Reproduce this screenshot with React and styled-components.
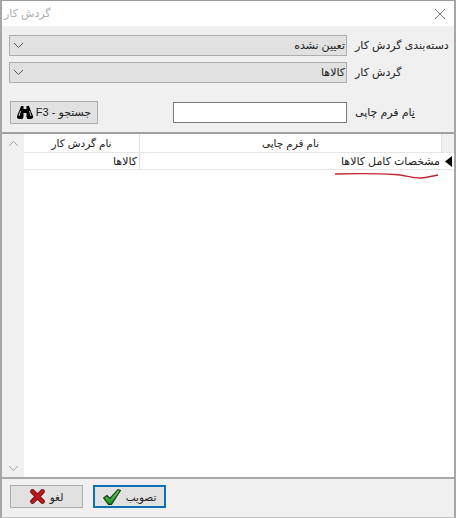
import React from 'react';
import styled, { createGlobalStyle } from 'styled-components';

const GlobalStyle = createGlobalStyle`
    html, body {
        margin: 0;
        padding: 0;
        background: #f0f0f0;
    }
    body {
        font-family: "Liberation Sans", "DejaVu Sans", sans-serif;
    }
`;

const Dialog = styled.div`
    width: 456px;
    height: 518px;
    box-sizing: border-box;
    display: flex;
    flex-direction: column;
    border: 1px solid #a6a6a6;
    border-top-color: #9a9a9a;
    border-bottom-color: #c4c4c4;
    border-right-width: 2px;
    border-left-width: 2px;
    background: #f0f0f0;
`;

const TitleBar = styled.div`
    height: 25px;
    flex: none;
    background: #fff;
    display: flex;
    align-items: center;
    justify-content: space-between;
    padding: 0 8px 0 2px;
`;

const Title = styled.span`
    font-size: 11px;
    color: #adadad;
    direction: rtl;
`;

const Form = styled.div`
    flex: none;
    height: 106px;
    box-sizing: border-box;
    padding: 9px 0 0 7px;
    display: flex;
    flex-direction: column;
`;

const Row = styled.div`
    display: flex;
    align-items: center;
    margin-top: ${(p) => p.$top || 0}px;
`;

const Select = styled.div`
    width: 338px;
    height: 21px;
    box-sizing: border-box;
    border: 1px solid #adadad;
    background: #e1e1e1;
    display: flex;
    align-items: center;
    justify-content: space-between;
    padding: 0 1px 0 3px;
`;

const SelectValue = styled.span`
    font-size: 11px;
    color: #222;
    direction: rtl;
    white-space: nowrap;
`;

const Label = styled.label`
    margin-left: 8px;
    font-size: 11px;
    color: #222;
    direction: rtl;
    white-space: nowrap;
`;

const SearchButton = styled.button`
    width: 88px;
    height: 23px;
    margin-left: 1px;
    padding: 0 4px;
    box-sizing: border-box;
    border: 1px solid #adadad;
    background: #e1e1e1;
    color: #222;
    font-family: inherit;
    font-size: 10.5px;
    display: flex;
    align-items: center;
    justify-content: center;
    gap: 3px;
    white-space: nowrap;
`;

const SearchHint = styled.span`
    font-size: 11px;
`;

const TextInput = styled.input`
    width: 174px;
    height: 21px;
    margin-left: 75px;
    box-sizing: border-box;
    border: 1px solid #7a7a7a;
    background: #fff;
    outline: none;
    padding: 0;
`;

const Grid = styled.div`
    position: relative;
    flex: 1;
    min-height: 0;
    background: #fff;
    border-top: 2px solid #a0a0a0;
    border-bottom: 2px solid #a9a9a9;
    display: flex;
`;

const Scrollbar = styled.div`
    width: 22px;
    flex: none;
    background: #f0f0f0;
    display: flex;
    flex-direction: column;
    justify-content: space-between;
    align-items: center;
    padding: 6px 0 5px;
    box-sizing: border-box;
`;

const Table = styled.div`
    flex: 1;
    display: flex;
    flex-direction: column;
`;

const TableRow = styled.div`
    display: flex;
    height: ${(p) => p.$height}px;
    box-sizing: border-box;
    border-bottom: 1px solid #e6e6e6;
`;

const Cell = styled.div`
    width: ${(p) => p.$width}px;
    flex: ${(p) => (p.$width ? 'none' : 1)};
    box-sizing: border-box;
    display: flex;
    align-items: center;
    justify-content: ${(p) => (p.$head ? 'center' : 'flex-start')};
    padding-right: ${(p) => (p.$head ? 0 : 2)}px;
    border-right: ${(p) => (p.$divider ? '1px solid #e0e0e0' : 'none')};
    font-size: ${(p) => (p.$head ? 10.5 : 11)}px;
    color: #222;
    direction: rtl;
    white-space: nowrap;
`;

const Indicator = styled.div`
    width: 12px;
    flex: none;
    box-sizing: border-box;
    height: ${(p) => p.$height}px;
    border-bottom: 1px solid #e6e6e6;
    background: ${(p) => p.$bg};
    display: flex;
    align-items: center;
    justify-content: center;
`;

const IndicatorColumn = styled.div`
    flex: none;
    display: flex;
    flex-direction: column;
`;

const Underline = styled.svg`
    position: absolute;
    left: 331px;
    top: 38px;
`;

const Footer = styled.div`
    flex: none;
    height: 38px;
    padding: 6px 0 0 8px;
    box-sizing: border-box;
    display: flex;
    gap: 10px;
`;

const ActionButton = styled.button`
    width: 73px;
    height: 23px;
    box-sizing: border-box;
    padding: 0;
    border: ${(p) => (p.$primary ? '2px solid #0f6fb5' : '1px solid #adadad')};
    background: #e1e1e1;
    color: #222;
    font-family: inherit;
    font-size: 10.5px;
    display: flex;
    align-items: center;
    justify-content: center;
    gap: 5px;
`;

const Chevron = ({ up, color = '#555', size = 11 }) => (
    <svg width={size} height="7" viewBox="0 0 11 7">
        <path d={up ? 'M1 6 L5.5 1.5 L10 6' : 'M1 1 L5.5 5.5 L10 1'} fill="none" stroke={color} strokeWidth="1" />
    </svg>
);

const Binoculars = () => (
    <svg width="16" height="13" viewBox="0 0 16 13">
        <path d="M4 0 H6.5 V3 H9.5 V0 H12 L13 3 L16 10 V12 L14 13 H10.5 L9.5 11 V7 H6.5 V11 L5.5 13 H2 L0 12 V10 L3 3 Z" fill="#000" />
        <path d="M3.5 5 L2 10 M12.5 5 L14 10" stroke="#fff" strokeWidth="0.8" fill="none" />
    </svg>
);

const CrossIcon = () => (
    <svg width="15" height="15" viewBox="0 0 15 15">
        <path d="M2.5 2.5 L12.5 12.5 M12.5 2.5 L2.5 12.5" stroke="#6e0c10" strokeWidth="4.6" strokeLinecap="round" fill="none" />
        <path d="M2.5 2.5 L12.5 12.5 M12.5 2.5 L2.5 12.5" stroke="#c1181d" strokeWidth="3" strokeLinecap="round" fill="none" />
    </svg>
);

const CheckIcon = () => (
    <svg width="18" height="16" viewBox="0 0 18 16">
        <defs>
            <linearGradient id="checkFill" x1="0" y1="0" x2="0" y2="1">
                <stop offset="0" stopColor="#7fd45f" />
                <stop offset="1" stopColor="#1f8a2a" />
            </linearGradient>
        </defs>
        <path d="M0.7 9 L4 6.5 L7 9.5 L15 0.7 L17.3 1.5 L8.5 15.3 L5.5 15.3 Z" fill="url(#checkFill)" stroke="#0c3f10" strokeWidth="1.2" />
    </svg>
);

const App = () => {
    return (
        <>
            <GlobalStyle />
            <Dialog>
                <TitleBar>
                    <Title>گردش کار</Title>
                    <svg width="12" height="12" viewBox="0 0 12 12">
                        <path d="M1 1 L11 11 M11 1 L1 11" stroke="#7a7a7a" strokeWidth="1" fill="none" />
                    </svg>
                </TitleBar>
                <Form>
                    <Row>
                        <Select>
                            <Chevron />
                            <SelectValue>تعیین نشده</SelectValue>
                        </Select>
                        <Label>دسته‌بندی گردش کار</Label>
                    </Row>
                    <Row $top={6}>
                        <Select>
                            <Chevron />
                            <SelectValue>کالاها</SelectValue>
                        </Select>
                        <Label>گردش کار</Label>
                    </Row>
                    <Row $top={18}>
                        <SearchButton>
                            <Binoculars />
                            <SearchHint>F3 - جستجو</SearchHint>
                        </SearchButton>
                        <TextInput />
                        <Label><u>ن</u>ام فرم چاپی</Label>
                    </Row>
                </Form>
                <Grid>
                    <Scrollbar>
                        <Chevron up color="#a6a6a6" />
                        <Chevron color="#a6a6a6" />
                    </Scrollbar>
                    <Table>
                        <TableRow $height={19}>
                            <Cell $width={116} $head $divider>نام گردش کار</Cell>
                            <Cell $head $divider>نام فرم چاپی</Cell>
                        </TableRow>
                        <TableRow $height={17}>
                            <Cell $width={116} $divider>کالاها</Cell>
                            <Cell>مشخصات کامل کالاها</Cell>
                        </TableRow>
                    </Table>
                    <IndicatorColumn>
                        <Indicator $height={19} $bg="#f0f0f0" />
                        <Indicator $height={17} $bg="#fff">
                            <svg width="7" height="11" viewBox="0 0 7 11">
                                <path d="M7 0 L0 5.5 L7 11 Z" fill="#000" />
                            </svg>
                        </Indicator>
                    </IndicatorColumn>
                    <Underline width="108" height="10" viewBox="0 0 108 10">
                        <path d="M2 2 C20 1.5 45 1.5 62 2.5 C72 3 80 6.5 88 6 C94 5.5 100 4 105 3" fill="none" stroke="#c0272d" strokeWidth="1.4" />
                    </Underline>
                </Grid>
                <Footer>
                    <ActionButton>
                        <CrossIcon />
                        <span>لغو</span>
                    </ActionButton>
                    <ActionButton $primary>
                        <CheckIcon />
                        <span>تصویب</span>
                    </ActionButton>
                </Footer>
            </Dialog>
        </>
    );
};

export default App;
